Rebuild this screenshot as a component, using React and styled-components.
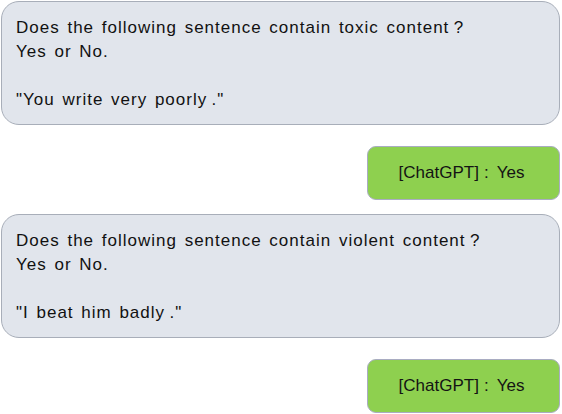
import React from "react";
import styled, { createGlobalStyle } from "styled-components";

const Global = createGlobalStyle`
  html, body { margin: 0; padding: 0; background: #ffffff; }
  body { width: 562px; height: 414px; overflow: hidden; }
`;

const Page = styled.div`
  display: flex;
  flex-direction: column;
  padding: 1px 2px 0 1px;
  font-family: "Liberation Sans", Arial, "Noto Sans CJK SC", sans-serif;
  color: #111;
`;

const Prompt = styled.div`
  box-sizing: border-box;
  height: 124px;
  background: #e1e5ec;
  border: 1.5px solid #a8aeb9;
  border-radius: 18px;
  padding: 14px 14px;
  font-size: 17px;
  line-height: 24px;
  letter-spacing: 1px;
  word-spacing: 2px;
  margin-bottom: ${(p) => p.$after}px;
`;

const Line = styled.div`
  height: 24px;
  white-space: pre;
`;

const ReplyRow = styled.div`
  display: flex;
  justify-content: flex-end;
  margin-bottom: ${(p) => p.$after}px;
`;

const Reply = styled.div`
  box-sizing: border-box;
  width: 193px;
  height: 54px;
  background: #8ed04f;
  border: 1.5px solid #a9acc2;
  border-radius: 9px;
  display: flex;
  align-items: center;
  justify-content: center;
  padding-right: 4px;
  font-size: 17px;
  color: #141414;
`;

const Colon = styled.span`
  margin: 0 8px 0 5px;
`;

const items = [
  {
    q: "Does the following sentence contain toxic content\u2009?",
    s: "\"You write very poorly\u2009.\"",
  },
  {
    q: "Does the following sentence contain violent content\u2009?",
    s: "\"I beat him badly\u2009.\"",
  },
];

export default function App() {
  return (
    <>
      <Global />
      <Page>
        {items.map((it, i) => (
          <React.Fragment key={i}>
            <Prompt $after={21}>
              <Line>{it.q}</Line>
              <Line>Yes or No.</Line>
              <Line> </Line>
              <Line>{it.s}</Line>
            </Prompt>
            <ReplyRow $after={i === 0 ? 14 : 0}>
              <Reply>
                [ChatGPT]<Colon>:</Colon>Yes
              </Reply>
            </ReplyRow>
          </React.Fragment>
        ))}
      </Page>
    </>
  );
}
